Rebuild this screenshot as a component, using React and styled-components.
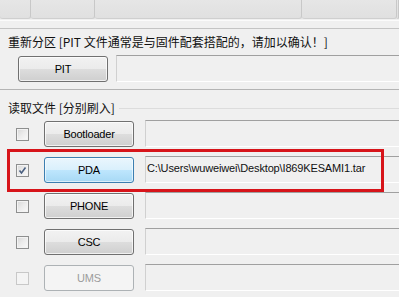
import React from "react";
import styled, { createGlobalStyle, css } from "styled-components";

const Global = createGlobalStyle`
  html, body { margin: 0; padding: 0; background: #f0f0f0; overflow: hidden; }
  * { box-sizing: border-box; }
`;

const Page = styled.div`
  position: relative;
  width: 399px;
  height: 297px;
  background: #f0f0f0;
  font-family: "Liberation Sans", "Noto Sans CJK SC", sans-serif;
  color: #000;
  overflow: hidden;
`;

const TabStrip = styled.div`
  display: flex;
  height: 19px;
  background: #e4e4e4;
`;

const TabCell = styled.div`
  flex: ${(p) => (p.$w ? `0 0 ${p.$w}px` : "1")};
  border-right: 1px solid #c8c8c8;
  border-bottom: 1px solid #cfcfcf;
  border-radius: 0 0 3px 3px;
  background: linear-gradient(#e6e6e6, #e0e0e0);
`;

const Rule = styled.div`
  height: 1px;
  background: ${(p) => p.$c};
  margin-top: ${(p) => p.$mt}px;
`;

const TitleRow = styled.div`
  display: flex;
  align-items: center;
  height: 14px;
  margin-top: ${(p) => p.$mt}px;
  padding-left: 8px;
  gap: 4px;
`;

const Title = styled.span`
  font-family: "Noto Sans CJK SC", sans-serif;
  font-size: 12px;
  line-height: 14px;
  white-space: nowrap;
  color: #111;
`;

const TitleLine = styled.div`
  flex: 1;
  height: 1px;
  background: #dcdcdc;
`;

const PitRow = styled.div`
  display: flex;
  align-items: flex-start;
  height: 28px;
  margin-top: 6px;
  padding-left: 18px;
  gap: 8px;
`;

const Row = styled.div`
  display: flex;
  align-items: flex-start;
  height: 36px;
  padding-left: 16px;
`;

const Check = styled.div`
  position: relative;
  width: 13px;
  height: 13px;
  margin-top: 8px;
  margin-right: 15px;
  border: 1px solid ${(p) => (p.$disabled ? "#c8c8c8" : "#8e8f8f")};
  background: ${(p) =>
    p.$disabled
      ? "#f4f4f4"
      : "linear-gradient(135deg, #d7d7d7 0%, #ececec 50%, #fafafa 100%)"};
  box-shadow: inset 0 0 0 1px ${(p) => (p.$disabled ? "#f4f4f4" : "#f3f3f3")};
`;

const Button = styled.div`
  display: flex;
  align-items: center;
  justify-content: center;
  width: 90px;
  height: 26px;
  margin-top: 1px;
  border-radius: 3px;
  font-size: 11px;
  letter-spacing: -0.2px;
  border: 1px solid #707070;
  color: #000;
  background: linear-gradient(#f2f2f2 0%, #ebebeb 50%, #dddddd 51%, #cfcfcf 100%);
  box-shadow: inset 0 0 0 1px rgba(255, 255, 255, 0.7);
  ${(p) =>
    p.$active &&
    css`
      border-color: #3c7fb1;
      background: linear-gradient(#eaf6fd 0%, #d9f0fc 50%, #bee6fd 51%, #a7d9f5 100%);
      box-shadow: inset 0 0 0 1px rgba(255, 255, 255, 0.6);
    `}
  ${(p) =>
    p.$disabled &&
    css`
      border-color: #adb2b5;
      color: #9c9c9c;
      background: #f4f4f4;
      box-shadow: none;
    `}
`;

const Field = styled.div`
  flex: 1;
  height: 27px;
  margin-left: ${(p) => p.$ml}px;
  border-top: 1px solid #a0a0a0;
  border-left: 1px solid #d0d0d0;
  border-bottom: 1px solid #ffffff;
  background: #f0f0f0;
  font-size: 11px;
  letter-spacing: -0.15px;
  line-height: 23px;
  padding-left: 1px;
  white-space: nowrap;
  color: #111;
`;

const Highlight = styled.div`
  position: absolute;
  left: 7px;
  top: 149px;
  width: 377px;
  height: 43px;
  border: 3px solid #d7141a;
  pointer-events: none;
`;

const rows = [
  { label: "Bootloader" },
  { label: "PDA", checked: true, active: true, path: "C:\\Users\\wuweiwei\\Desktop\\I869KESAMI1.tar" },
  { label: "PHONE" },
  { label: "CSC" },
  { label: "UMS", disabled: true },
];

function CheckMark() {
  return (
    <svg width="11" height="11" viewBox="0 0 11 11" style={{ position: "absolute", left: 0, top: 0 }}>
      <path d="M2.5 5.5 L4.5 8 L8.5 2.5" fill="none" stroke="#4a5f80" strokeWidth="1.6" />
    </svg>
  );
}

export default function App() {
  return (
    <Page>
      <Global />
      <TabStrip>
        <TabCell $w={31} />
        <TabCell $w={64} />
        <TabCell $w={207} />
        <TabCell $w={95} />
        <TabCell />
      </TabStrip>
      <Rule $c="#fbfbfb" $mt={1} />
      <Rule $c="#c4c4c4" $mt={7} />
      <TitleRow $mt={6}>
        <Title>重新分区 [PIT 文件通常是与固件配套搭配的，请加以确认！]</Title>
      </TitleRow>
      <PitRow>
        <Button>PIT</Button>
        <Field $ml={0} />
      </PitRow>
      <Rule $c="#b4b4b4" $mt={6} />
      <TitleRow $mt={11}>
        <Title>读取文件 [分别刷入]</Title>
        <TitleLine />
      </TitleRow>
      <div style={{ height: 5 }} />
      {rows.map((r) => (
        <Row key={r.label}>
          <Check $disabled={r.disabled}>{r.checked && <CheckMark />}</Check>
          <Button $active={r.active} $disabled={r.disabled}>
            {r.label}
          </Button>
          <Field $ml={11}>{r.path}</Field>
        </Row>
      ))}
      <Highlight />
    </Page>
  );
}
